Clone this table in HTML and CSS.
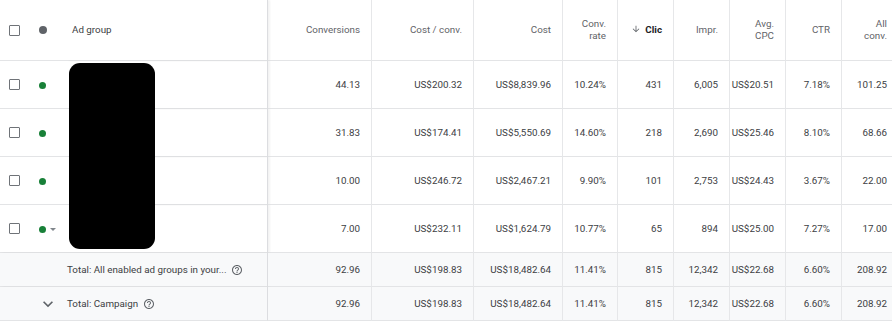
FILE: index.html
```html
<!DOCTYPE html>
<html lang="en">
<head>
  <meta charset="UTF-8" />
  <title>Ad groups</title>
  <link rel="stylesheet" href="styles.css">
</head>
<body>
  <div class="grid-wrap">
    <table class="grid">
      <colgroup>
        <col class="c-check"><col class="c-status"><col class="c-name">
        <col class="c-conv"><col class="c-cpa"><col class="c-cost"><col class="c-m">
        <col class="c-m"><col class="c-m"><col class="c-m"><col class="c-m"><col class="c-m">
      </colgroup>
      <thead>
        <tr>
          <th class="check"><span class="box"></span></th>
          <th class="status"><span class="dot grey"></span></th>
          <th class="name">Ad group</th>
          <th>Conversions</th>
          <th>Cost / conv.</th>
          <th>Cost</th>
          <th>Conv.<br>rate</th>
          <th class="sorted">
            <svg class="arrow" viewBox="0 0 24 24" width="10" height="10"><path d="M20 12l-1.41-1.41L13 16.17V4h-2v12.17l-5.58-5.59L4 12l8 8 8-8z"/></svg>Clic
          </th>
          <th>Impr.</th>
          <th>Avg.<br>CPC</th>
          <th>CTR</th>
          <th>All<br>conv.</th>
        </tr>
      </thead>
      <tbody>
        <tr class="row">
          <td class="check"><span class="box"></span></td>
          <td class="status"><span class="dot"></span></td>
          <td class="name"></td>
          <td>44.13</td><td>US$200.32</td><td>US$8,839.96</td><td>10.24%</td>
          <td>431</td><td>6,005</td><td>US$20.51</td><td>7.18%</td><td>101.25</td>
        </tr>
        <tr class="row">
          <td class="check"><span class="box"></span></td>
          <td class="status"><span class="dot"></span></td>
          <td class="name"></td>
          <td>31.83</td><td>US$174.41</td><td>US$5,550.69</td><td>14.60%</td>
          <td>218</td><td>2,690</td><td>US$25.46</td><td>8.10%</td><td>68.66</td>
        </tr>
        <tr class="row">
          <td class="check"><span class="box"></span></td>
          <td class="status"><span class="dot"></span></td>
          <td class="name"></td>
          <td>10.00</td><td>US$246.72</td><td>US$2,467.21</td><td>9.90%</td>
          <td>101</td><td>2,753</td><td>US$24.43</td><td>3.67%</td><td>22.00</td>
        </tr>
        <tr class="row">
          <td class="check"><span class="box"></span></td>
          <td class="status"><span class="dot"></span><span class="caret"></span></td>
          <td class="name"></td>
          <td>7.00</td><td>US$232.11</td><td>US$1,624.79</td><td>10.77%</td>
          <td>65</td><td>894</td><td>US$25.00</td><td>7.27%</td><td>17.00</td>
        </tr>
        <tr class="total">
          <td class="label" colspan="3">
            <div class="label-in first">
              <span>Total: All enabled ad groups in your...</span>
              <svg class="help" viewBox="0 0 24 24" width="12" height="12"><path d="M11 18h2v-2h-2v2zm1-16C6.48 2 2 6.48 2 12s4.48 10 10 10 10-4.48 10-10S17.52 2 12 2zm0 18c-4.41 0-8-3.59-8-8s3.59-8 8-8 8 3.59 8 8-3.59 8-8 8zm0-14c-2.21 0-4 1.79-4 4h2c0-1.1.9-2 2-2s2 .9 2 2c0 2-3 1.75-3 5h2c0-2.25 3-2.5 3-5 0-2.21-1.79-4-4-4z"/></svg>
            </div>
          </td>
          <td>92.96</td><td>US$198.83</td><td>US$18,482.64</td><td>11.41%</td>
          <td>815</td><td>12,342</td><td>US$22.68</td><td>6.60%</td><td>208.92</td>
        </tr>
        <tr class="total">
          <td class="label" colspan="3">
            <div class="label-in">
              <svg class="chevron" viewBox="0 0 24 24" width="20" height="20"><path d="M16.59 8.59L12 13.17 7.41 8.59 6 10l6 6 6-6z"/></svg>
              <span>Total: Campaign</span>
              <svg class="help" viewBox="0 0 24 24" width="12" height="12"><path d="M11 18h2v-2h-2v2zm1-16C6.48 2 2 6.48 2 12s4.48 10 10 10 10-4.48 10-10S17.52 2 12 2zm0 18c-4.41 0-8-3.59-8-8s3.59-8 8-8 8 3.59 8 8-3.59 8-8 8zm0-14c-2.21 0-4 1.79-4 4h2c0-1.1.9-2 2-2s2 .9 2 2c0 2-3 1.75-3 5h2c0-2.25 3-2.5 3-5 0-2.21-1.790-4-4-4z"/></svg>
            </div>
          </td>
          <td>92.96</td><td>US$198.83</td><td>US$18,482.64</td><td>11.41%</td>
          <td>815</td><td>12,342</td><td>US$22.68</td><td>6.60%</td><td>208.92</td>
        </tr>
      </tbody>
    </table>
    <div class="redact"></div>
  </div>
</body>
</html>
```

FILE: styles.css
```css
* {
  box-sizing: border-box;
}
body {
  margin: 0;
  overflow: hidden;
  background: #fff;
  font-family: Roboto, "Liberation Sans", sans-serif;
  font-size: 9.8px;
  color: #3c4043;
}
.grid-wrap {
  position: relative;
  width: 898px;
}
.grid {
  width: 898px;
  table-layout: fixed;
  border-collapse: separate;
  border-spacing: 0;
}
.c-check { width: 28px; }
.c-status { width: 39px; }
.c-name { width: 201px; }
.c-conv { width: 104px; }
.c-cpa { width: 102px; }
.c-cost { width: 89px; }
.c-m { width: 56px; }
.grid col:nth-child(7) { width: 55px; }

th, td {
  padding: 0 11px 0 0;
  text-align: right;
  white-space: nowrap;
  border-right: 1px solid #e6e7e9;
  border-bottom: 1px solid #e3e4e6;
  font-weight: 400;
}
th {
  height: 61px;
  color: #5f6368;
  line-height: 12px;
}
th:last-child, td:last-child {
  border-right: none;
}
.row td {
  height: 48px;
}
.total td {
  height: 34px;
  background: #f8f9fa;
}
th.check, td.check,
th.status, td.status {
  border-right: none;
  padding: 0;
  text-align: left;
}
th.name, td.name, td.label {
  text-align: left;
  border-right: 1px solid #dcdde0;
  box-shadow: 2px 0 2px rgba(0, 0, 0, 0.05);
}
th.name {
  padding-left: 5px;
  color: #3c4043;
}
th.sorted {
  color: #202124;
  font-weight: 700;
}
.arrow {
  fill: #5f6368;
  margin-right: 4px;
  vertical-align: -1px;
}
.box {
  display: block;
  width: 11px;
  height: 11px;
  margin-left: 9px;
  border: 1.5px solid #6f7378;
  border-radius: 1px;
}
.status .dot {
  display: inline-block;
  width: 7px;
  height: 7px;
  margin-left: 11px;
  border-radius: 50%;
  background: #188038;
  vertical-align: middle;
}
.status .dot.grey {
  width: 8px;
  height: 8px;
  background: #5f6368;
}
.caret {
  display: inline-block;
  margin-left: 4px;
  border-left: 3px solid transparent;
  border-right: 3px solid transparent;
  border-top: 3px solid #80868b;
  vertical-align: middle;
}
.label-in {
  display: flex;
  align-items: center;
  padding-left: 38px;
}
.label-in.first {
  padding-left: 67px;
}
.label-in span {
  margin-right: 5px;
}
.chevron {
  fill: #5f6368;
  margin-right: 9px;
}
.help {
  fill: #5f6368;
}
.redact {
  position: absolute;
  left: 69px;
  top: 63px;
  width: 86px;
  height: 186px;
  background: #000;
  border-radius: 11px;
}
```
